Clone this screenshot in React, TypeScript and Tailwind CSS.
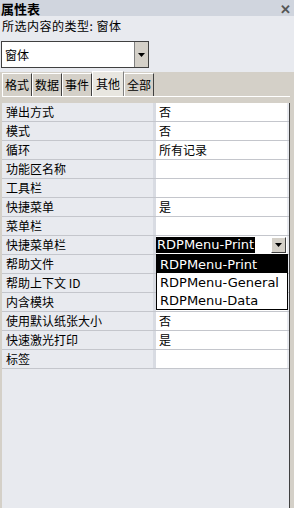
const rows: { label: string; value: string }[] = [
  { label: "弹出方式", value: "否" },
  { label: "模式", value: "否" },
  { label: "循环", value: "所有记录" },
  { label: "功能区名称", value: "" },
  { label: "工具栏", value: "" },
  { label: "快捷菜单", value: "是" },
  { label: "菜单栏", value: "" },
  { label: "快捷菜单栏", value: "__combo__" },
  { label: "帮助文件", value: "" },
  { label: "帮助上下文 ID", value: "" },
  { label: "内含模块", value: "" },
  { label: "使用默认纸张大小", value: "否" },
  { label: "快速激光打印", value: "是" },
  { label: "标签", value: "" },
];

const tabs = ["格式", "数据", "事件", "其他", "全部"];

const cjk = { fontFamily: '"Noto Sans CJK SC", "Liberation Sans", sans-serif' };
const latin = { fontFamily: '"DejaVu Sans", "Noto Sans CJK SC", sans-serif' };

const Arrow = () => (
  <svg width="7" height="4" viewBox="0 0 7 4">
    <path d="M0 0h7L3.5 4z" fill="#000" />
  </svg>
);

export default function App() {
  return (
    <div className="w-[294px] h-[508px] bg-[#e8eaef] flex flex-col overflow-hidden text-[12px] text-black" style={cjk}>
      <div className="h-[16px] bg-[#d0d5de] flex items-center justify-between pl-[1px] pr-[3px]">
        <span className="font-bold text-[13px] leading-none">属性表</span>
        <span className="text-[#555] font-bold text-[13px] leading-none">✕</span>
      </div>
      <div className="h-[20px] pl-[2px] flex items-center leading-none tracking-[0.5px]">所选内容的类型:&nbsp;窗体</div>
      <div className="pt-[5px] pl-[1px] h-[36px]">
        <div className="w-[148px] h-[27px] border border-[#404040] bg-white flex items-stretch">
          <div className="flex-1 flex items-center pl-[3px]">窗体</div>
          <div className="w-[14px] bg-[#d4d0c8] border-l border-[#808080] flex items-center justify-center">
            <Arrow />
          </div>
        </div>
      </div>
      <div className="flex-1 flex flex-col bg-[#d4d0c8]">
        <div className="h-[24px] flex items-end pl-[2px]">
          {tabs.map((t) => (
            <div
              key={t}
              className={
                t === "其他"
                  ? "h-[25px] -mt-[1px] px-[3px] bg-[#e8e6e0] border-t border-l border-white border-r border-r-[#808080] flex items-center"
                  : "h-[23px] px-[2px] bg-[#d4d0c8] border-t border-l border-white border-r border-r-[#404040] flex items-center"
              }
            >
              {t}
            </div>
          ))}
        </div>
        <div className="flex-1 flex flex-col ml-[2px] mr-[4px] border-t border-white pt-[6px] bg-[#d4d0c8]">
          <div className="flex-1 flex flex-col bg-[#e8eaef] border-r border-[#404040]">
            <div className="flex flex-col">
              {rows.map((r) => (
                <div key={r.label} className="h-[19px] flex border-b border-[#c4c6cc]">
                  <div className="w-[154px] pl-[4px] flex items-center leading-none border-r-[3px] border-[#d8dbe2]">
                    {r.label}
                  </div>
                  <div className="flex-1 bg-white mr-[2px] flex items-center leading-none relative">
                    {r.value === "__combo__" ? (
                      <div className="flex-1 flex items-center h-full text-[13px]" style={latin}>
                        <span className="bg-black text-white px-[1px] leading-[16px]">RDPMenu-Print</span>
                        <div className="flex-1" />
                        <div className="w-[15px] h-[16px] bg-[#d4d0c8] border border-white border-r-[#404040] border-b-[#404040] flex items-center justify-center mr-[1px]">
                          <Arrow />
                        </div>
                        <div className="absolute left-0 -right-[1px] top-[18px] border border-black bg-white flex flex-col z-10">
                          <div className="h-[18px] bg-black text-white flex items-center pl-[3px]">RDPMenu-Print</div>
                          <div className="h-[18px] flex items-center pl-[3px]">RDPMenu-General</div>
                          <div className="h-[18px] flex items-center pl-[3px]">RDPMenu-Data</div>
                        </div>
                      </div>
                    ) : (
                      <span className="pl-[3px]">{r.value}</span>
                    )}
                  </div>
                </div>
              ))}
            </div>
            <div className="flex-1" />
          </div>
        </div>
      </div>
    </div>
  );
}
